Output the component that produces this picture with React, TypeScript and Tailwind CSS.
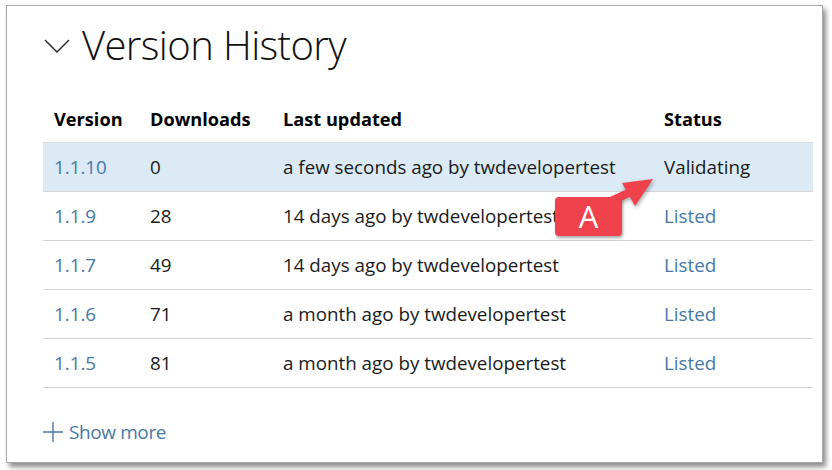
import React from 'react';

type Row = {
    version: string;
    downloads: number;
    updated: string;
    status: string;
    current?: boolean;
};

const rows: Row[] = [
    { version: '1.1.10', downloads: 0, updated: 'a few seconds ago by twdevelopertest', status: 'Validating', current: true },
    { version: '1.1.9', downloads: 28, updated: '14 days ago by twdevelopertest', status: 'Listed' },
    { version: '1.1.7', downloads: 49, updated: '14 days ago by twdevelopertest', status: 'Listed' },
    { version: '1.1.6', downloads: 71, updated: 'a month ago by twdevelopertest', status: 'Listed' },
    { version: '1.1.5', downloads: 81, updated: 'a month ago by twdevelopertest', status: 'Listed' },
];

const cols = 'grid grid-cols-[107px_133px_381px_1fr]';

// red "A" callout with its arrow, drawn over the table
function Callout() {
    return (
        <div className="absolute left-[538px] top-[163px] w-[130px] h-[80px] pointer-events-none">
            <svg width="130" height="80" viewBox="0 0 130 80" className="absolute left-0 top-0 drop-shadow-[1px_2px_2px_rgba(0,0,0,0.35)]">
                <path d="M66 32 L90 21" stroke="#f0424c" strokeWidth="8" strokeLinecap="round" fill="none" />
                <polygon points="108,10 77,14 90,37" fill="#f0424c" />
            </svg>
            <div className="absolute left-[10px] top-[28px] w-[67px] h-[39px] rounded-[4px] bg-[#f0424c] shadow-[1px_2px_3px_rgba(0,0,0,0.35)] flex items-center justify-center text-white text-[31px] leading-none font-['Open_Sans',sans-serif]">
                A
            </div>
        </div>
    );
}

export default function App() {
    return (
        <div className="w-[832px] h-[470px] bg-white pt-[5px] pl-[6px] font-['Open_Sans',sans-serif]">
            <div className="relative w-[817px] h-[458px] bg-white border border-[#a8a8a8] shadow-[3px_4px_5px_rgba(0,0,0,0.45)] pl-[36px] pr-[9px] pt-[14px]">
                {/* heading */}
                <div className="flex items-center gap-[12px] h-[50px]">
                    <svg width="26" height="14" viewBox="0 0 26 14" className="ml-[1px] mt-[2px]">
                        <path d="M1 1 L13 13 L25 1" stroke="#222" strokeWidth="1.4" fill="none" />
                    </svg>
                    <h2 className="text-[40px] font-light text-[#111] leading-none tracking-[-0.6px]">Version History</h2>
                </div>

                {/* table */}
                <div className="mt-[36px] text-[18.8px]">
                    <div className={`${cols} h-[36px] items-start font-bold text-black text-[18.2px]`}>
                        <div className="pl-[11px]">Version</div>
                        <div>Downloads</div>
                        <div>Last updated</div>
                        <div>Status</div>
                    </div>
                    <div className="border-t border-[#dcdcdc]">
                        {rows.map((r) => (
                            <div
                                key={r.version}
                                className={`${cols} h-[49px] items-center border-b border-[#d4d4d4] ${r.current ? 'bg-[#dbeaf5]' : ''}`}
                            >
                                <div className="pl-[11px] text-[#4678a8]">{r.version}</div>
                                <div className="text-[#1a1a1a]">{r.downloads}</div>
                                <div className="text-[#1a1a1a]">{r.updated}</div>
                                <div className={r.current ? 'text-[#1a1a1a]' : 'text-[#4678a8]'}>{r.status}</div>
                            </div>
                        ))}
                    </div>
                </div>

                {/* show more */}
                <div className="mt-[30px] flex items-center gap-[6px] text-[#4a78a6]">
                    <svg width="20" height="20" viewBox="0 0 20 20">
                        <path d="M10 0 V20 M0 10 H20" stroke="#4a78a6" strokeWidth="1.4" />
                    </svg>
                    <span className="text-[19px] tracking-[-0.4px]">Show more</span>
                </div>

                <Callout />
            </div>
        </div>
    );
}
